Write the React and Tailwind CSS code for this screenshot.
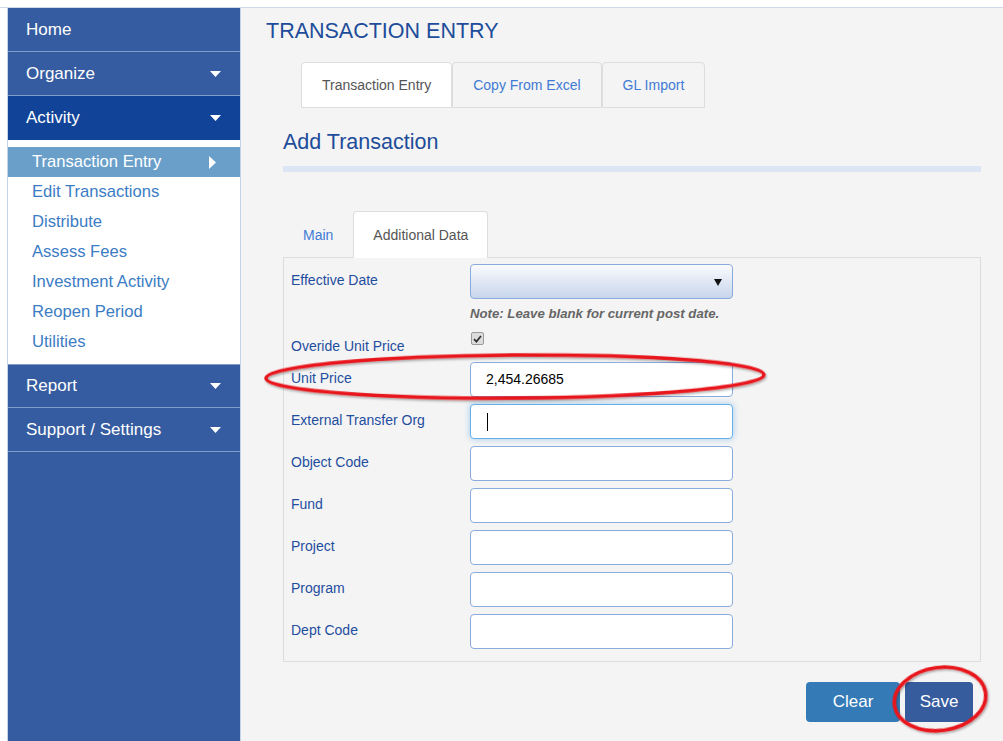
import React from "react";

const NavHeader = ({ label, caret = true, active = false, topBorder = false, noBorder = false }) => {
  return (
    <div
      className={`flex h-[44px] items-center justify-between pl-[18px] pr-[19px] text-[17px] text-white ${noBorder ? "" : "border-b border-[#809dcd]"} ${active ? "bg-[#114499]" : ""} ${topBorder ? "border-t" : ""}`}
    >
      <span>{label}</span>
      {caret && (
        <svg width="11" height="6" viewBox="0 0 11 6">
          <polygon points="0,0 11,0 5.5,6" fill="#ffffff" />
        </svg>
      )}
    </div>
  );
};

const SubItem = ({ label, active = false }) => {
  return (
    <div
      className={`flex h-[30px] items-center justify-between pl-[24px] pr-[24px] text-[16.6px] ${active ? "bg-[#6a9fca] text-white" : "text-[#3b7cc4]"}`}
    >
      <span>{label}</span>
      {active && (
        <svg width="7" height="13" viewBox="0 0 7 13">
          <polygon points="0,0 7,6.5 0,13" fill="#ffffff" />
        </svg>
      )}
    </div>
  );
};

const Sidebar = () => {
  const subItems = ["Edit Transactions", "Distribute", "Assess Fees", "Investment Activity", "Reopen Period", "Utilities"];
  return (
    <aside className="ml-[7px] w-[234px] shrink-0 border-x border-[#c5d3e8] bg-[#355ca0]">
      <NavHeader label="Home" caret={false} />
      <NavHeader label="Organize" />
      <NavHeader label="Activity" active noBorder />
      <div className="bg-white pb-[7px] pt-[7px]">
        <SubItem label="Transaction Entry" active />
        {subItems.map(item => <SubItem key={item} label={item} />)}
      </div>
      <NavHeader label="Report" topBorder />
      <NavHeader label="Support / Settings" />
    </aside>
  );
};

const TopTab = ({ label, active = false }) => {
  return (
    <div
      className={`flex h-[46px] items-center rounded-t-[4px] border border-[#dddddd] px-[20px] text-[14px] ${active ? "bg-white text-[#555555]" : "text-[#3f7bd5]"}`}
    >
      {label}
    </div>
  );
};

const TextBox = ({ value, focused = false }) => {
  return (
    <div
      className={`flex h-[35px] w-[263px] items-center rounded-[4px] border bg-white pl-[15px] text-[14px] text-black ${focused ? "border-[#66afe9] shadow-[0_0_6px_rgba(102,175,233,0.6)]" : "border-[#8aabdd]"}`}
    >
      {value}
      {focused && <span className="ml-px h-[18px] w-px bg-black" />}
    </div>
  );
};

const FieldRow = ({ label, children }) => {
  return (
    <div className="mt-[7px] flex">
      <div className="w-[179px] pt-[8px] text-[14px] leading-[16px] text-[#1f4e9f]">{label}</div>
      {children}
    </div>
  );
};

const Annotations = () => {
  return (
    <svg className="pointer-events-none absolute left-0 top-0" width="1003" height="741" viewBox="0 0 1003 741">
      <defs>
        <filter id="shade" x="-10%" y="-30%" width="120%" height="160%">
          <feDropShadow dx="1" dy="1.5" stdDeviation="1" floodColor="#000000" floodOpacity="0.35" />
        </filter>
      </defs>
      <ellipse cx="515" cy="376.5" rx="249" ry="21.5" fill="none" stroke="#e8161b" strokeWidth="3.5" transform="rotate(-0.4 515 376.5)" filter="url(#shade)" />
      <ellipse cx="940" cy="699" rx="46" ry="31.5" fill="none" stroke="#e8161b" strokeWidth="3.5" transform="rotate(-8 940 699)" filter="url(#shade)" />
    </svg>
  );
};

const App = () => {
  const fields = ["Object Code", "Fund", "Project", "Program", "Dept Code"];

  return (
    <div className="relative h-[741px] w-[1003px] overflow-hidden bg-white font-['Liberation_Sans',Arial,sans-serif]">
      <div className="h-[8px] border-b border-[#cfd9e8]" />
      <div className="flex h-[733px]">
        <Sidebar />
        <main className="flex-1 bg-[#f4f4f4] pl-[25px] pt-[11px]">
          <h1 className="text-[21.5px] leading-[24px] text-[#1d4c9a]">TRANSACTION ENTRY</h1>

          <div className="ml-[35px] mt-[19px] flex">
            <TopTab label="Transaction Entry" active />
            <TopTab label="Copy From Excel" />
            <TopTab label="GL Import" />
          </div>

          <div className="ml-[17px]">
            <h2 className="mt-[22px] text-[21.5px] leading-[24px] text-[#1d4c9a]">Add Transaction</h2>
            <div className="mt-[12px] h-[6px] w-[698px] bg-[#dbe5f4]" />

            {/* inner tabs */}
            <div className="relative z-10 -mb-px mt-[39px] flex items-end text-[14px]">
              <div className="flex h-[46px] items-center px-[20px] text-[#3f7bd5]">Main</div>
              <div className="flex h-[47px] items-center rounded-t-[4px] border border-b-0 border-[#dddddd] bg-white px-[19px] text-[#555555]">
                Additional Data
              </div>
            </div>

            <div className="w-[698px] border border-[#dddddd] pb-[12px] pl-[7px] pt-[6px]">
              <div className="flex">
                <div className="w-[179px] pt-[8px] text-[14px] leading-[16px] text-[#1f4e9f]">Effective Date</div>
                <div className="flex h-[35px] w-[263px] items-center justify-end rounded-[4px] border border-[#8aabdd] bg-gradient-to-b from-[#fafbfd] to-[#c7d5ec] pr-[10px]">
                  <svg width="8" height="8" viewBox="0 0 8 8">
                    <polygon points="0,1 8,1 4,8" fill="#111111" />
                  </svg>
                </div>
              </div>
              <div className="ml-[179px] mt-[7px] text-[13.2px] font-bold italic leading-[16px] text-[#666666]">
                Note: Leave blank for current post date.
              </div>

              <div className="flex h-[33px]">
                <div className="w-[179px] pt-[16px] text-[14px] leading-[16px] text-[#1f4e9f]">Overide Unit Price</div>
                <div className="ml-px mt-[10px] flex h-[13px] w-[13px] items-center justify-center rounded-[2px] border border-[#9a9a9a] bg-[#dcdcdc]">
                  <svg width="9" height="8" viewBox="0 0 9 8">
                    <path d="M1 4.2 L3.4 6.6 L8 1" fill="none" stroke="#333333" strokeWidth="1.8" />
                  </svg>
                </div>
              </div>

              <FieldRow label="Unit Price">
                <TextBox value="2,454.26685" />
              </FieldRow>
              <FieldRow label="External Transfer Org">
                <TextBox focused />
              </FieldRow>
              {fields.map(f => (
                <FieldRow key={f} label={f}>
                  <TextBox />
                </FieldRow>
              ))}
            </div>

            <div className="mt-[20px] flex w-[698px] justify-end gap-[5px] pr-[8px]">
              <button className="h-[40px] w-[94px] rounded-[4px] bg-[#337ab7] text-[17px] text-white">Clear</button>
              <button className="h-[40px] w-[68px] rounded-[4px] bg-[#365c9e] text-[17px] text-white">Save</button>
            </div>
          </div>
        </main>
      </div>
      <Annotations />
    </div>
  );
};

export default App;
